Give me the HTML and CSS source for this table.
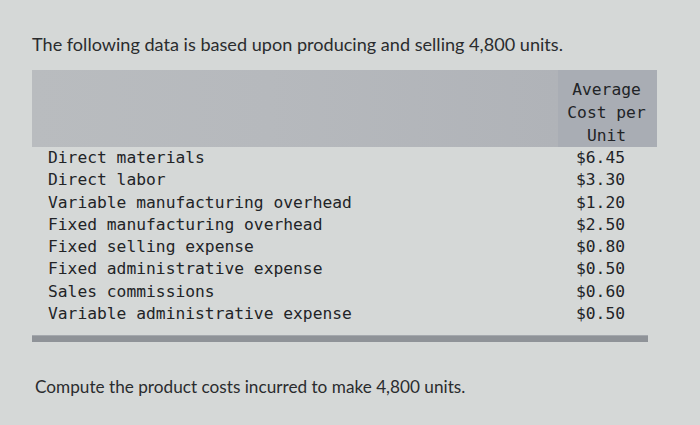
FILE: index.html
```html
<!DOCTYPE html>
<html>
<head>
<meta charset="utf-8">
<link rel="stylesheet" href="styles.css">
</head>
<body>
<div class="page">
  <p class="intro">The following data is based upon producing and selling 4,800 units.</p>
  <table class="costs">
    <thead>
      <tr>
        <th class="blank"></th>
        <th class="head">Average<br>Cost per<br>Unit</th>
      </tr>
    </thead>
    <tbody>
      <tr><td class="label">Direct materials</td><td class="val">$6.45</td></tr>
      <tr><td class="label">Direct labor</td><td class="val">$3.30</td></tr>
      <tr><td class="label">Variable manufacturing overhead</td><td class="val">$1.20</td></tr>
      <tr><td class="label">Fixed manufacturing overhead</td><td class="val">$2.50</td></tr>
      <tr><td class="label">Fixed selling expense</td><td class="val">$0.80</td></tr>
      <tr><td class="label">Fixed administrative expense</td><td class="val">$0.50</td></tr>
      <tr><td class="label">Sales commissions</td><td class="val">$0.60</td></tr>
      <tr><td class="label">Variable administrative expense</td><td class="val">$0.50</td></tr>
    </tbody>
  </table>
  <div class="rule"></div>
  <p class="question">Compute the product costs incurred to make 4,800 units.</p>
</div>
</body>
</html>
```
FILE: styles.css
```css
html, body {
  margin: 0;
  padding: 0;
}
body {
  background: #d5d8d7;
  width: 700px;
  height: 425px;
  overflow: hidden;
}
.page {
  padding: 33px 0 0 32px;
}
.intro {
  margin: 0;
  font-family: Lato, "Open Sans", sans-serif;
  font-size: 18.1px;
  line-height: 23px;
  color: #2a2c2e;
  letter-spacing: 0;
}
.costs {
  margin-top: 14px;
  border-collapse: collapse;
  width: 625px;
  font-family: "DejaVu Sans Mono", "Liberation Mono", monospace;
  font-size: 16.3px;
  color: #222427;
}
.costs th {
  padding: 0;
  height: 77px;
  font-weight: normal;
}
.blank {
  background: linear-gradient(90deg, #b9bcbf 0%, #b6b9bd 45%, #b0b3b8 100%);
}
.head {
  width: 97px;
  background: #a9adb4;
  line-height: 23px;
  text-align: center;
  vertical-align: bottom;
  padding-right: 2px !important;
}
.costs td {
  padding: 0;
  height: 22.3px;
  line-height: 22.3px;
}
.label {
  padding-left: 16px !important;
  white-space: pre;
}
.val {
  text-align: center;
  padding-right: 14px !important;
}
.rule {
  margin-top: 10px;
  width: 616px;
  height: 6px;
  background: #8f9398;
  border-top: 1px solid #a4a8ad;
}
.question {
  margin: 34px 0 0 3px;
  font-family: Lato, "Open Sans", sans-serif;
  font-size: 17.2px;
  line-height: 21px;
  color: #2a2c2e;
}
```
